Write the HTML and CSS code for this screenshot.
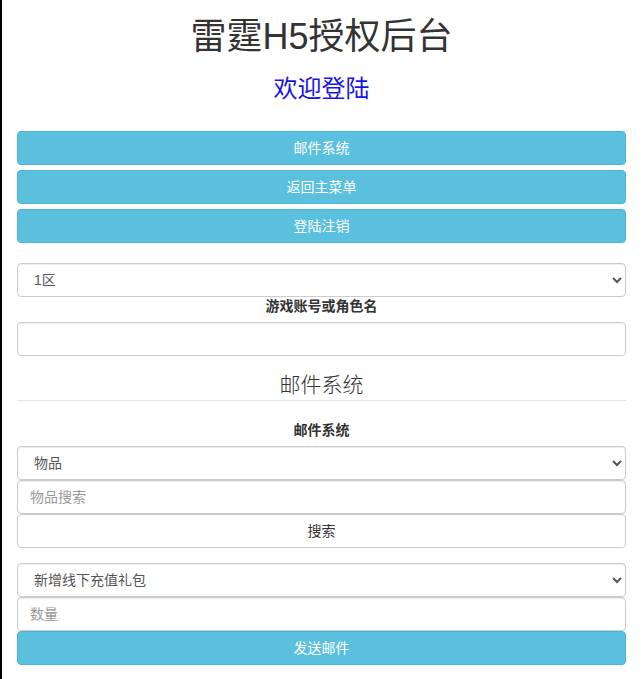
FILE: index.html
```html
<!DOCTYPE html>
<html lang="zh-CN">
<head>
<meta charset="utf-8">
<title>雷霆H5授权后台</title>
<link rel="stylesheet" href="styles.css">
</head>
<body>
<div class="page">
  <h1 class="title">雷霆H5授权后台</h1>
  <h3 class="welcome">欢迎登陆</h3>
  <div class="menu">
    <button class="btn btn-info">邮件系统</button>
    <button class="btn btn-info">返回主菜单</button>
    <button class="btn btn-info">登陆注销</button>
  </div>
  <div class="account">
    <select class="control select">
      <option>1区</option>
    </select>
    <label class="label">游戏账号或角色名</label>
    <input class="control" type="text">
  </div>
  <div class="legend">邮件系统</div>
  <label class="label">邮件系统</label>
  <div class="stack">
    <select class="control select">
      <option>物品</option>
    </select>
    <input class="control" type="text" placeholder="物品搜索">
    <button class="btn btn-default">搜索</button>
  </div>
  <div class="stack second">
    <select class="control select">
      <option>新增线下充值礼包</option>
    </select>
    <input class="control" type="text" placeholder="数量">
    <button class="btn btn-info">发送邮件</button>
  </div>
</div>
</body>
</html>
```
FILE: styles.css
```css
* { box-sizing: border-box; }
html, body { margin: 0; background: #fff; }
body {
  font-family: "Liberation Sans", "Noto Sans CJK SC", sans-serif;
  font-size: 14px;
  line-height: 1.42857;
  color: #333;
}
.page {
  border-left: 2px solid #000;
  padding: 17px 17px 0 15px;
  min-height: 679px;
}
.title {
  margin: 0;
  font-size: 36px;
  font-weight: 400;
  line-height: 40px;
  text-align: center;
  color: #333;
}
.welcome {
  margin: 19px 0 0;
  font-size: 24px;
  font-weight: 400;
  line-height: 26px;
  text-align: center;
  color: #1515e8;
}
.menu {
  margin-top: 29px;
  display: flex;
  flex-direction: column;
  gap: 5px;
}
.btn {
  display: block;
  width: 100%;
  height: 34px;
  padding: 6px 12px;
  font-family: inherit;
  font-size: 14px;
  line-height: 20px;
  text-align: center;
  border: 1px solid transparent;
  border-radius: 4px;
  cursor: pointer;
  margin: 0;
}
.btn-info {
  color: #fff;
  background: #5bc0de;
  border-color: #46b8da;
}
.btn-default {
  color: #333;
  background: #fff;
  border-color: #ccc;
}
.account {
  margin-top: 20px;
}
.control {
  display: block;
  width: 100%;
  height: 34px;
  padding: 6px 12px;
  font-family: inherit;
  font-size: 14px;
  line-height: 20px;
  color: #555;
  background: #fff;
  border: 1px solid #ccc;
  border-radius: 4px;
  box-shadow: inset 0 1px 1px rgba(0,0,0,.075);
  margin: 0;
}
.control::placeholder { color: #999; }
.select { padding-left: 12px; }
.label {
  display: block;
  margin-bottom: 5px;
  font-weight: 700;
  text-align: center;
  color: #333;
}
.legend {
  margin-top: 14px;
  margin-bottom: 20px;
  font-size: 21px;
  font-weight: 300;
  line-height: 30px;
  text-align: center;
  color: #333;
  border-bottom: 1px solid #e5e5e5;
}
.stack {
  display: flex;
  flex-direction: column;
}
.second {
  margin-top: 15px;
}
```
